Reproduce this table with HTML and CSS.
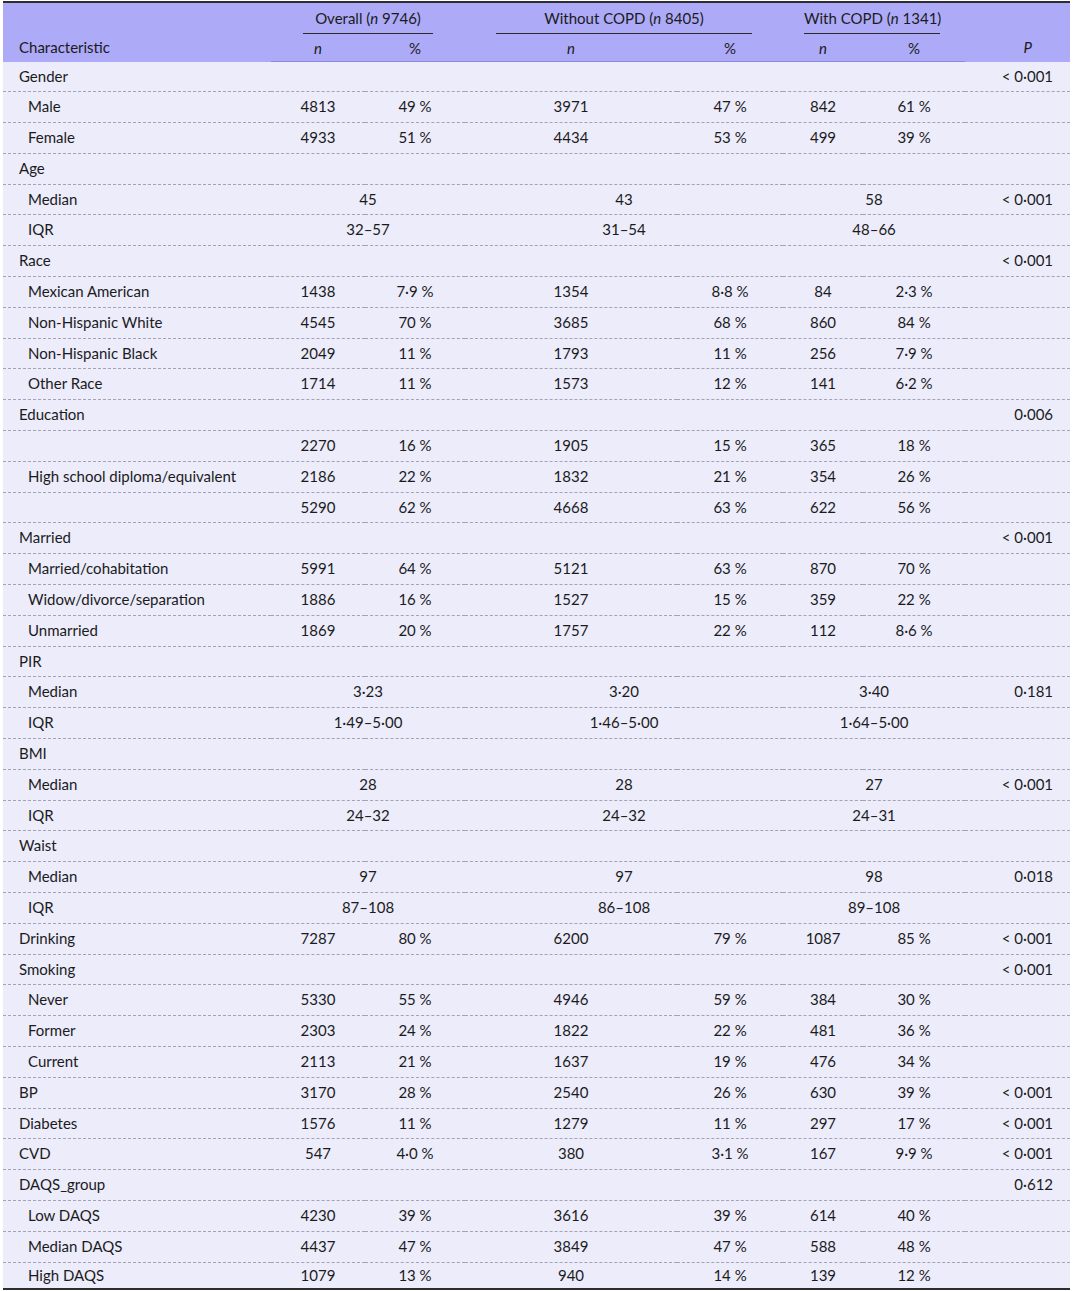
FILE: index.html
```html
<!DOCTYPE html>
<html lang="en">

<head>
    <meta charset="UTF-8">
    <title>Characteristics by COPD status</title>
    <link rel="stylesheet" href="styles.css">
</head>

<body>
    <table class="stats">
        <colgroup>
            <col class="c-char">
            <col class="c-ovn">
            <col class="c-ovp">
            <col class="c-won">
            <col class="c-wop">
            <col class="c-wcn">
            <col class="c-wcp">
            <col class="c-p">
        </colgroup>
        <thead>
            <tr class="head-top">
                <th class="label-head" rowspan="2">Characteristic</th>
                <th colspan="2" class="group ov"><span>Overall (<i>n</i> 9746)</span></th>
                <th colspan="2" class="group wo"><span>Without COPD (<i>n</i> 8405)</span></th>
                <th colspan="2" class="group wc"><span>With COPD (<i>n</i> 1341)</span></th>
                <th class="p-head" rowspan="2"><i>P</i></th>
            </tr>
            <tr class="head-sub">
                <th><i>n</i></th>
                <th>%</th>
                <th><i>n</i></th>
                <th>%</th>
                <th><i>n</i></th>
                <th>%</th>
            </tr>
        </thead>
        <tbody>
            <tr><td class="grp">Gender</td><td></td><td></td><td></td><td></td><td></td><td></td><td class="p">&lt; 0·001</td></tr>
            <tr><td class="sub">Male</td><td>4813</td><td>49 %</td><td>3971</td><td>47 %</td><td>842</td><td>61 %</td><td class="p"></td></tr>
            <tr><td class="sub">Female</td><td>4933</td><td>51 %</td><td>4434</td><td>53 %</td><td>499</td><td>39 %</td><td class="p"></td></tr>

            <tr><td class="grp">Age</td><td></td><td></td><td></td><td></td><td></td><td></td><td class="p"></td></tr>
            <tr><td class="sub">Median</td><td colspan="2">45</td><td colspan="2">43</td><td colspan="2">58</td><td class="p">&lt; 0·001</td></tr>
            <tr><td class="sub">IQR</td><td colspan="2">32–57</td><td colspan="2">31–54</td><td colspan="2">48–66</td><td class="p"></td></tr>

            <tr><td class="grp">Race</td><td></td><td></td><td></td><td></td><td></td><td></td><td class="p">&lt; 0·001</td></tr>
            <tr><td class="sub">Mexican American</td><td>1438</td><td>7·9 %</td><td>1354</td><td>8·8 %</td><td>84</td><td>2·3 %</td><td class="p"></td></tr>
            <tr><td class="sub">Non-Hispanic White</td><td>4545</td><td>70 %</td><td>3685</td><td>68 %</td><td>860</td><td>84 %</td><td class="p"></td></tr>
            <tr><td class="sub">Non-Hispanic Black</td><td>2049</td><td>11 %</td><td>1793</td><td>11 %</td><td>256</td><td>7·9 %</td><td class="p"></td></tr>
            <tr><td class="sub">Other Race</td><td>1714</td><td>11 %</td><td>1573</td><td>12 %</td><td>141</td><td>6·2 %</td><td class="p"></td></tr>

            <tr><td class="grp">Education</td><td></td><td></td><td></td><td></td><td></td><td></td><td class="p">0·006</td></tr>
            <tr><td class="sub"></td><td>2270</td><td>16 %</td><td>1905</td><td>15 %</td><td>365</td><td>18 %</td><td class="p"></td></tr>
            <tr><td class="sub">High school diploma/equivalent</td><td>2186</td><td>22 %</td><td>1832</td><td>21 %</td><td>354</td><td>26 %</td><td class="p"></td></tr>
            <tr><td class="sub"></td><td>5290</td><td>62 %</td><td>4668</td><td>63 %</td><td>622</td><td>56 %</td><td class="p"></td></tr>

            <tr><td class="grp">Married</td><td></td><td></td><td></td><td></td><td></td><td></td><td class="p">&lt; 0·001</td></tr>
            <tr><td class="sub">Married/cohabitation</td><td>5991</td><td>64 %</td><td>5121</td><td>63 %</td><td>870</td><td>70 %</td><td class="p"></td></tr>
            <tr><td class="sub">Widow/divorce/separation</td><td>1886</td><td>16 %</td><td>1527</td><td>15 %</td><td>359</td><td>22 %</td><td class="p"></td></tr>
            <tr><td class="sub">Unmarried</td><td>1869</td><td>20 %</td><td>1757</td><td>22 %</td><td>112</td><td>8·6 %</td><td class="p"></td></tr>

            <tr><td class="grp">PIR</td><td></td><td></td><td></td><td></td><td></td><td></td><td class="p"></td></tr>
            <tr><td class="sub">Median</td><td colspan="2">3·23</td><td colspan="2">3·20</td><td colspan="2">3·40</td><td class="p">0·181</td></tr>
            <tr><td class="sub">IQR</td><td colspan="2">1·49–5·00</td><td colspan="2">1·46–5·00</td><td colspan="2">1·64–5·00</td><td class="p"></td></tr>

            <tr><td class="grp">BMI</td><td></td><td></td><td></td><td></td><td></td><td></td><td class="p"></td></tr>
            <tr><td class="sub">Median</td><td colspan="2">28</td><td colspan="2">28</td><td colspan="2">27</td><td class="p">&lt; 0·001</td></tr>
            <tr><td class="sub">IQR</td><td colspan="2">24–32</td><td colspan="2">24–32</td><td colspan="2">24–31</td><td class="p"></td></tr>

            <tr><td class="grp">Waist</td><td></td><td></td><td></td><td></td><td></td><td></td><td class="p"></td></tr>
            <tr><td class="sub">Median</td><td colspan="2">97</td><td colspan="2">97</td><td colspan="2">98</td><td class="p">0·018</td></tr>
            <tr><td class="sub">IQR</td><td colspan="2">87–108</td><td colspan="2">86–108</td><td colspan="2">89–108</td><td class="p"></td></tr>

            <tr><td class="grp">Drinking</td><td>7287</td><td>80 %</td><td>6200</td><td>79 %</td><td>1087</td><td>85 %</td><td class="p">&lt; 0·001</td></tr>

            <tr><td class="grp">Smoking</td><td></td><td></td><td></td><td></td><td></td><td></td><td class="p">&lt; 0·001</td></tr>
            <tr><td class="sub">Never</td><td>5330</td><td>55 %</td><td>4946</td><td>59 %</td><td>384</td><td>30 %</td><td class="p"></td></tr>
            <tr><td class="sub">Former</td><td>2303</td><td>24 %</td><td>1822</td><td>22 %</td><td>481</td><td>36 %</td><td class="p"></td></tr>
            <tr><td class="sub">Current</td><td>2113</td><td>21 %</td><td>1637</td><td>19 %</td><td>476</td><td>34 %</td><td class="p"></td></tr>

            <tr><td class="grp">BP</td><td>3170</td><td>28 %</td><td>2540</td><td>26 %</td><td>630</td><td>39 %</td><td class="p">&lt; 0·001</td></tr>
            <tr><td class="grp">Diabetes</td><td>1576</td><td>11 %</td><td>1279</td><td>11 %</td><td>297</td><td>17 %</td><td class="p">&lt; 0·001</td></tr>
            <tr><td class="grp">CVD</td><td>547</td><td>4·0 %</td><td>380</td><td>3·1 %</td><td>167</td><td>9·9 %</td><td class="p">&lt; 0·001</td></tr>

            <tr><td class="grp">DAQS_group</td><td></td><td></td><td></td><td></td><td></td><td></td><td class="p">0·612</td></tr>
            <tr><td class="sub">Low DAQS</td><td>4230</td><td>39 %</td><td>3616</td><td>39 %</td><td>614</td><td>40 %</td><td class="p"></td></tr>
            <tr><td class="sub">Median DAQS</td><td>4437</td><td>47 %</td><td>3849</td><td>47 %</td><td>588</td><td>48 %</td><td class="p"></td></tr>
            <tr class="last"><td class="sub">High DAQS</td><td>1079</td><td>13 %</td><td>940</td><td>14 %</td><td>139</td><td>12 %</td><td class="p"></td></tr>
        </tbody>
    </table>
</body>

</html>
```

FILE: styles.css
```css
body {
    margin: 0;
    background-color: #fff;
    font-family: Lato, 'Liberation Sans', sans-serif;
    font-size: 15px;
    color: #1b1b1b;
}

.stats {
    width: 1067px;
    margin: 1px 0 0 3px;
    border-collapse: collapse;
    table-layout: fixed;
    border-top: 2px solid #2d2d2d;
    border-bottom: 2px solid #2d2d2d;
}

.c-char { width: 268px; }
.c-ovn { width: 94px; }
.c-ovp { width: 100px; }
.c-won { width: 212px; }
.c-wop { width: 106px; }
.c-wcn { width: 80px; }
.c-wcp { width: 102px; }
.c-p { width: 105px; }

thead th {
    background-color: #adaaf8;
    font-weight: normal;
    text-align: center;
    padding: 0;
    white-space: nowrap;
}

.head-top th {
    height: 31px;
    vertical-align: bottom;
}

.head-sub th {
    height: 27px;
    border-bottom: 1px solid #8e8ad9;
}

.group span {
    display: block;
    padding-bottom: 6px;
    border-bottom: 1.5px solid #2a2a2a;
    white-space: nowrap;
}

.ov span { margin: 0 32px 0 32px; }
.wo span { margin: 0 31px 0 31px; }
.wc span { margin: 0 25px 0 21px; }

.label-head {
    text-align: left !important;
    padding: 0 0 6px 16px !important;
}

.p-head {
    text-align: right !important;
    padding: 0 38px 6px 0 !important;
}

tbody td {
    background-color: #ececfb;
    text-align: center;
    padding: 5px 0;
    line-height: 19.8px;
    border-bottom: 1px dashed #a3a3b3;
    white-space: nowrap;
}

tbody .last td {
    padding: 3px 0;
    border-bottom: none;
}

tbody td.grp {
    text-align: left;
    padding-left: 16px;
}

tbody td.sub {
    text-align: left;
    padding-left: 25px;
}

tbody td.p {
    text-align: right;
    padding-right: 17px;
}
```
